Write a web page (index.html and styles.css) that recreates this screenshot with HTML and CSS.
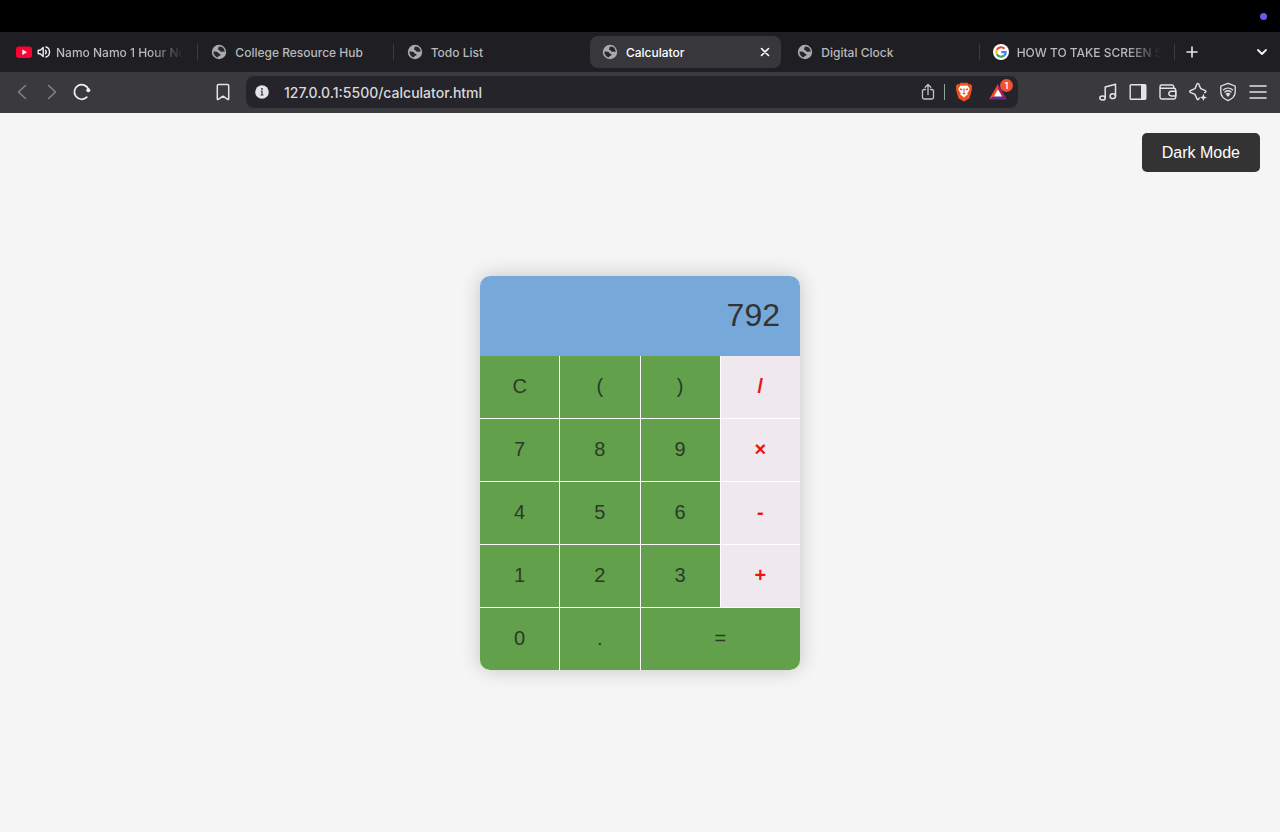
FILE: index.html
```html
<!DOCTYPE html>
<html lang="en">
<head>
<meta charset="utf-8">
<title>Calculator</title>
<link rel="stylesheet" href="styles.css">
</head>
<body>
<svg class="defs" width="0" height="0" aria-hidden="true">
  <symbol id="globe" viewBox="0 0 16 16">
    <circle cx="8" cy="8" r="7.2" fill="#a9aaae"/>
    <path d="M8.800 2.600c-1.700.3-1 1.300-1.600 2.100-.5.800.2 1.300 1.100 1.500.9.300.7 1.500 1.800 1.600 1.100.2 1.900-.5 2.700-.1.300.1.500.3.800.4.2-2.800-1.700-5.300-4.800-5.500z" fill="#28282c"/>
    <path d="M2.400 7.600c1.500-.2 3.200-.1 4.200.5.900.6.700 1.400 1.600 1.600.9.200 1.700.6 1.400 1.400-.4 1-1.900.7-2.300 1.500l-.3.900C4 12.900 2.300 10.500 2.400 7.600z" fill="#28282c"/>
  </symbol>
</svg>
<div class="menubar"><span class="dot"></span></div>
<header class="browser">
  <div class="tabstrip">
    <nav class="tabs" aria-label="Tabs">
      <a class="tab divided" href="#">
        <svg class="icon" viewBox="0 0 16 16"><rect x="0" y="2.500" width="16" height="11.500" rx="3" fill="#ff0033"/><path d="M6.300 5.600v5.400L11 8.300z" fill="#fff"/></svg>
        <svg class="speaker" viewBox="0 0 14 14" fill="none" stroke="#eee" stroke-width="1.400" stroke-linejoin="round" stroke-linecap="round"><path d="M1.200 5.200h2l3-2.800v9.200l-3-2.800h-2z"/><path d="M8.500 5.200c.9 1 .9 2.600 0 3.600"/><path d="M9 2c4.700 1.400 4.700 8.600 0 10"/></svg>
        <span class="tab-title faded">Namo Namo 1 Hour No</span>
      </a>
      <a class="tab divided" href="#"><svg class="icon"><use href="#globe"/></svg><span class="tab-title">College Resource Hub</span></a>
      <a class="tab" href="#"><svg class="icon"><use href="#globe"/></svg><span class="tab-title">Todo List</span></a>
      <div class="tab active">
        <svg class="icon"><use href="#globe"/></svg><span class="tab-title">Calculator</span>
        <button class="close" aria-label="Close tab"><svg width="10" height="10" viewBox="0 0 10 10" stroke="#fff" stroke-width="1.600" stroke-linecap="round"><path d="M1.500 1.500l7 7M8.500 1.500l-7 7"/></svg></button>
      </div>
      <a class="tab divided" href="#"><svg class="icon"><use href="#globe"/></svg><span class="tab-title">Digital Clock</span></a>
      <a class="tab divided" href="#">
        <svg class="icon" viewBox="0 0 16 16"><circle cx="8" cy="8" r="8" fill="#fff"/><g fill="none" stroke-width="2.200"><path d="M11.500 4.800A4.700 4.700 0 0 0 3.900 5.700" stroke="#ea4335"/><path d="M3.900 5.700a4.700 4.700 0 0 0 0 4.600" stroke="#fbbc05"/><path d="M3.900 10.300a4.700 4.700 0 0 0 7.100 1.400" stroke="#34a853"/><path d="M11 11.700A4.700 4.700 0 0 0 12.700 8.200H8.200" stroke="#4285f4"/></g></svg>
        <span class="tab-title faded">HOW TO TAKE SCREEN S</span>
      </a>
    </nav>
    <button class="tool" aria-label="New tab"><svg width="12" height="12" viewBox="0 0 12 12" stroke="#e6e6e8" stroke-width="1.600" stroke-linecap="round"><path d="M6 1v10M1 6h10"/></svg></button>
    <button class="tool" aria-label="Search tabs"><svg width="12" height="12" viewBox="0 0 12 12" fill="none" stroke="#f0f0f2" stroke-width="1.900" stroke-linecap="round" stroke-linejoin="round"><path d="M2 4l4 4 4-4"/></svg></button>
  </div>
  <div class="toolbar">
    <button class="tool" aria-label="Back"><svg width="20" height="20" viewBox="0 0 20 20" fill="none" stroke="#85858a" stroke-width="1.400" stroke-linecap="round" stroke-linejoin="round"><path d="M13.500 3.500L6.500 10l7 6.500"/></svg></button>
    <button class="tool" aria-label="Forward"><svg width="20" height="20" viewBox="0 0 20 20" fill="none" stroke="#85858a" stroke-width="1.400" stroke-linecap="round" stroke-linejoin="round"><path d="M6.500 3.500l7 6.500-7 6.500"/></svg></button>
    <button class="tool" aria-label="Reload"><svg width="20" height="20" viewBox="0 0 20 20" fill="none" stroke="#f0f0f2" stroke-width="1.700" stroke-linecap="round"><path d="M14.800 15.200A7.300 7.300 0 1 1 16.500 7.300"/><circle cx="16.300" cy="8.300" r="2" fill="#f0f0f2" stroke="none"/></svg></button>
    <button class="tool bookmark" aria-label="Bookmark"><svg width="20" height="20" viewBox="0 0 20 20" fill="none" stroke="#e4e4e8" stroke-width="1.500" stroke-linejoin="round"><path d="M4.300 3.700q0-1.200 1.200-1.200h9q1.200 0 1.200 1.200V17q0 1-1 .4L10 14.200l-4.700 3.200q-1 .6-1-.4z"/></svg></button>
    <div class="address">
      <button class="info" aria-label="Site information"><svg width="14" height="14" viewBox="0 0 14 14"><circle cx="7" cy="7" r="6.800" fill="#e4e4e8"/><path d="M5.800 6.200H7v3.600M5.600 10h2.800" fill="none" stroke="#28282c" stroke-width="1.100"/><circle cx="7" cy="4" r=".9" fill="#28282c"/></svg></button>
      <input class="url" type="text" aria-label="Address" value="127.0.0.1:5500/calculator.html">
      <button class="share" aria-label="Share"><svg width="16" height="18" viewBox="0 0 16 18" fill="none" stroke="#c4c4c8" stroke-width="1.300" stroke-linecap="round" stroke-linejoin="round"><path d="M5.500 6.500H4q-1.500 0-1.500 1.500v6.500Q2.500 16 4 16h8q1.500 0 1.500-1.500V8q0-1.500-1.500-1.500h-1.500M8 11.500v-10M5.200 4.200L8 1.500l2.800 2.700"/></svg></button>
      <span class="rule"></span>
      <button class="shield" aria-label="Shields"><svg width="18" height="20" viewBox="0 0 18 20"><path d="M5.500.800h7L14 2.400l1.800-.3 1.400 2.500-.5 1.800.2 1-2 7.500q-.4 1.300-1.500 2L9 19.500l-4.400-2.600q-1.100-.7-1.500-2L1 7.400l.300-1-.5-1.800 1.400-2.500 1.800.3z" fill="#f4511e"/><path d="M9 3.800l3.300-.3 2.300 3-.6 2.300-1.700 2.300.4 1.400-1.700 1.300L9 15.600l-2-1.800-1.700-1.300.4-1.400L4 8.800l-.6-2.300 2.300-3z" fill="#fff"/><path d="M5 6.300l2.500.6-.5 1.500-2.200-.7zM13 6.300l-2.500.6.500 1.500 2.200-.7zM8.300 6.500h1.400l-.3 4.200 1.300.8L9 12.700l-1.700-1.200 1.300-.8z" fill="#f4511e"/></svg></button>
      <button class="rewards" aria-label="Rewards, 1 notification"><svg width="20" height="18" viewBox="0 0 20 18"><path d="M10 1L1 16.500l5.500-3.300L10 7z" fill="#ff4724"/><path d="M10 1l9 15.500-5.500-3.300L10 7z" fill="#9e1f63"/><path d="M1 16.500h18l-5.500-3.300h-7z" fill="#662d91"/><path d="M10 6.300l4.200 7.200H5.800z" fill="#fff"/></svg><span class="badge">1</span></button>
    </div>
    <div class="actions">
      <button class="tool" aria-label="Playlist"><svg width="20" height="20" viewBox="0 0 20 20" fill="none" stroke="#e4e4e8" stroke-width="1.500" stroke-linejoin="round"><ellipse cx="4.500" cy="16" rx="2.700" ry="2.100"/><ellipse cx="14.800" cy="14.200" rx="2.700" ry="2.400"/><path d="M7.200 16V5l10.300-2.800v12"/></svg></button>
      <button class="tool" aria-label="Sidebar"><svg width="20" height="20" viewBox="0 0 20 20"><rect x="2.200" y="2.700" width="15.600" height="14.600" rx="1" fill="none" stroke="#e4e4e8" stroke-width="1.400"/><path d="M13 2.700h5v14.600h-5z" fill="#e4e4e8"/></svg></button>
      <button class="tool" aria-label="Wallet"><svg width="20" height="20" viewBox="0 0 20 20" fill="none" stroke="#e4e4e8" stroke-width="1.400" stroke-linejoin="round"><path d="M2 5v10.300q0 1.700 1.700 1.700H16q1.700 0 1.700-1.700V8q0-1.700-1.700-1.700H3.500Q2 6.300 2 4.700 2 3 3.700 3H14q1.500 0 1.700 1.500v1.800"/><path d="M17.800 9.200h-4.500q-2.500.2-2.500 2.400t2.500 2.400h4.500z"/></svg></button>
      <button class="tool" aria-label="Assistant"><svg width="20" height="20" viewBox="0 0 20 20"><path d="M11.500 15.500L10.700 17q-.9 1.200-1.700 0L7 12.400 2.300 10.300q-1.200-.8 0-1.600L7 6.600 9 2q.8-1.200 1.700 0l2 4.600 4.700 2.100q1.100.8 0 1.600l-1.200.6" fill="none" stroke="#e4e4e8" stroke-width="1.400" stroke-linejoin="round"/><path d="M15.400 11.800l1 2.600 2.600 1-2.600 1-1 2.600-1-2.600-2.600-1 2.600-1z" fill="#e4e4e8"/></svg></button>
      <button class="tool" aria-label="VPN"><svg width="20" height="20" viewBox="0 0 20 20" fill="none" stroke="#e4e4e8" stroke-width="1.300" stroke-linecap="round" stroke-linejoin="round"><path d="M10 1.300l7.200 2.700V10c0 4-3 6.900-7.200 8.700C5.800 16.900 2.800 14 2.800 10V4z"/><path d="M5.500 7.800c2.600-2.200 6.400-2.200 9 0M6.900 10c1.900-1.500 4.300-1.500 6.200 0M8.300 12.100c1.100-.8 2.300-.8 3.400 0"/><circle cx="10" cy="13.200" r=".7" fill="#e4e4e8"/></svg></button>
      <button class="tool" aria-label="Menu"><svg width="20" height="20" viewBox="0 0 20 20" stroke="#e4e4e8" stroke-width="1.500" stroke-linecap="round"><path d="M2 4h16M2 10h16M2 16h16"/></svg></button>
    </div>
  </div>
</header>
<main class="page">
  <button class="mode">Dark Mode</button>
  <section class="calculator" aria-label="Calculator">
    <input class="display" type="text" aria-label="Result" value="792" readonly>
    <div class="keys">
      <button class="key">C</button><button class="key">(</button><button class="key">)</button><button class="key operator">/</button>
      <button class="key">7</button><button class="key">8</button><button class="key">9</button><button class="key operator">×</button>
      <button class="key">4</button><button class="key">5</button><button class="key">6</button><button class="key operator">-</button>
      <button class="key">1</button><button class="key">2</button><button class="key">3</button><button class="key operator">+</button>
      <button class="key">0</button><button class="key">.</button><button class="key equals">=</button>
    </div>
  </section>
</main>
</body>
</html>
```

FILE: styles.css
```css
* {
  box-sizing: border-box;
}

body {
  margin: 0;
  min-height: 100vh;
  display: flex;
  flex-direction: column;
  background: #f5f5f5;
  font-family: Inter, "Liberation Sans", sans-serif;
}

button {
  margin: 0;
  padding: 0;
  border: 0;
  background: none;
  font: inherit;
  cursor: pointer;
}

svg {
  display: block;
  flex: none;
}

.defs {
  position: absolute;
}

.menubar {
  height: 32px;
  padding-right: 13px;
  display: flex;
  align-items: center;
  justify-content: flex-end;
  background: #000;
}

.dot {
  width: 7px;
  height: 7px;
  border-radius: 50%;
  background: #6e56f0;
}

.tabstrip {
  height: 40px;
  padding: 0 3px 0 4px;
  display: flex;
  align-items: center;
  background: #1f1e23;
}

.tabstrip > .tool:last-child {
  margin-left: 40px;
}

.tabs {
  flex: 1;
  min-width: 0;
  margin-right: 5px;
  display: flex;
  gap: 4px;
}

.tab {
  position: relative;
  flex: 1 1 0;
  min-width: 0;
  height: 32px;
  padding: 0 11px 0 12px;
  display: flex;
  align-items: center;
  gap: 8px;
  border-radius: 8px;
  color: #b9b9bd;
  font-size: 12px;
  font-weight: 500;
  text-decoration: none;
}

.tab:first-child {
  gap: 5px;
}

.tab.active {
  background: #38373c;
  color: #fff;
}

.tab.divided::after {
  content: "";
  position: absolute;
  top: 8px;
  right: -3px;
  width: 1px;
  height: 16px;
  background: #3c3b40;
}

.icon {
  width: 16px;
  height: 16px;
}

.speaker {
  width: 14px;
  height: 14px;
}

.tab-title {
  flex: 1;
  min-width: 0;
  white-space: nowrap;
}

.tab-title.faded {
  mask-image: linear-gradient(to right, #000 calc(100% - 34px), transparent);
}

.close {
  width: 10px;
  height: 10px;
}

.toolbar {
  height: 41px;
  padding: 0 7px 1px;
  display: flex;
  align-items: center;
  background: #3a393e;
}

.tool {
  flex: none;
  width: 30px;
  height: 30px;
  display: flex;
  align-items: center;
  justify-content: center;
}

.bookmark {
  margin-left: 111px;
}

.address {
  flex: 1;
  min-width: 0;
  height: 32px;
  margin: 0 75px 0 8px;
  padding: 0 10px 0 9px;
  display: flex;
  align-items: center;
  border-radius: 8px;
  background: #25242a;
}

.url {
  flex: 1;
  min-width: 0;
  margin-left: 15px;
  padding: 0;
  border: 0;
  background: none;
  color: #d9d9dc;
  font: 500 14px Inter, "Liberation Sans", sans-serif;
}

.rule {
  width: 1px;
  height: 16px;
  margin: 0 10px 0 8px;
  background: #8fa59c;
}

.rewards {
  position: relative;
  margin-left: 15px;
}

.badge {
  position: absolute;
  top: -4px;
  right: -5px;
  width: 13px;
  height: 13px;
  border-radius: 50%;
  background: #f4502f;
  color: #fff;
  font-size: 9px;
  font-weight: 600;
  line-height: 13px;
  text-align: center;
}

.actions {
  display: flex;
}

.page {
  position: relative;
  flex: 1;
  display: flex;
  align-items: center;
  justify-content: center;
  font-family: "Liberation Sans", Arial, sans-serif;
}

.mode {
  position: absolute;
  top: 20px;
  right: 20px;
  padding: 10px 20px;
  border-radius: 5px;
  background: #333;
  color: #fff;
  font-size: 16px;
  line-height: 19px;
}

.calculator {
  width: 320px;
  overflow: hidden;
  border-radius: 10px;
  background: #fff;
  box-shadow: 0 0 20px rgba(0, 0, 0, 0.2);
}

.display {
  display: block;
  width: 100%;
  height: 80px;
  padding: 0 20px;
  border: 0;
  background: #77a8da;
  color: #333;
  font: 32px "Liberation Sans", Arial, sans-serif;
  text-align: right;
}

.keys {
  display: grid;
  grid-template-columns: repeat(4, 1fr);
  grid-auto-rows: 62px;
  gap: 1px;
  background: #fff;
}

.key {
  background: #62a04b;
  color: #2b3a2a;
  font-size: 20px;
}

.key.operator {
  background: #efe8ee;
  color: #e8180c;
  font-weight: bold;
}

.key.equals {
  grid-column: span 2;
}
```
